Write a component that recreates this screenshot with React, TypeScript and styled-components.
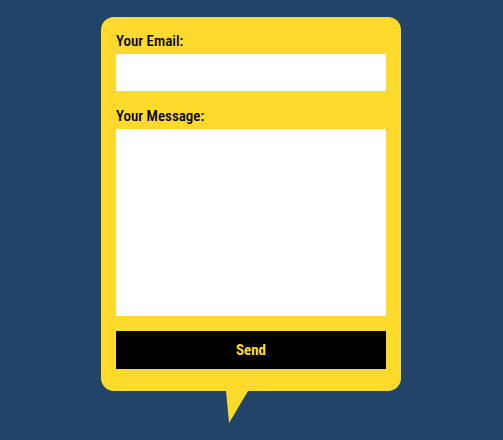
import React from "react";
import styled, { createGlobalStyle } from "styled-components";

const GlobalStyle = createGlobalStyle`
  html, body {
    margin: 0;
    padding: 0;
    background: #224469;
    height: 100%;
  }
  body {
    font-family: Roboto, "Liberation Sans", sans-serif;
  }
`;

const Page = styled.div`
  display: flex;
  justify-content: center;
  padding: 17px 1px 0 0;
`;

const Bubble = styled.form`
  position: relative;
  box-sizing: border-box;
  width: 300px;
  height: 374px;
  padding: 14px 15px 22px;
  background: #fdda2c;
  border-radius: 13px;
  display: flex;
  flex-direction: column;

  &::after {
    content: "";
    position: absolute;
    left: 125px;
    top: 100%;
    width: 22px;
    height: 32px;
    background: #fdda2c;
    clip-path: polygon(0 0, 100% 0, 14% 100%);
  }
`;

const Label = styled.label`
  display: block;
  font-size: 15px;
  line-height: 20px;
  font-weight: 500;
  font-stretch: condensed;
  color: #000;
  margin-bottom: 3px;
`;

const Field = styled.input<{ $tall?: boolean }>`
  box-sizing: border-box;
  width: 270px;
  height: ${(p) => (p.$tall ? "187px" : "37px")};
  border: none;
  background: #fff;
  margin: 0 0 15px;
  padding: 0 8px;
`;

const Area = styled(Field).attrs({ as: "textarea" })`
  resize: none;
  display: block;
`;

const SendButton = styled.button`
  width: 270px;
  height: 38px;
  border: none;
  background: #000;
  color: #fdda2c;
  font-family: Roboto, "Liberation Sans", sans-serif;
  font-size: 15px;
  font-weight: 700;
  font-stretch: condensed;
  cursor: pointer;
`;

export default function App() {
  return (
    <>
      <GlobalStyle />
      <Page>
        <Bubble onSubmit={(e) => e.preventDefault()}>
          <Label htmlFor="email">Your Email:</Label>
          <Field id="email" type="email" />
          <Label htmlFor="msg">Your Message:</Label>
          <Area id="msg" $tall />
          <SendButton type="submit">Send</SendButton>
        </Bubble>
      </Page>
    </>
  );
}
